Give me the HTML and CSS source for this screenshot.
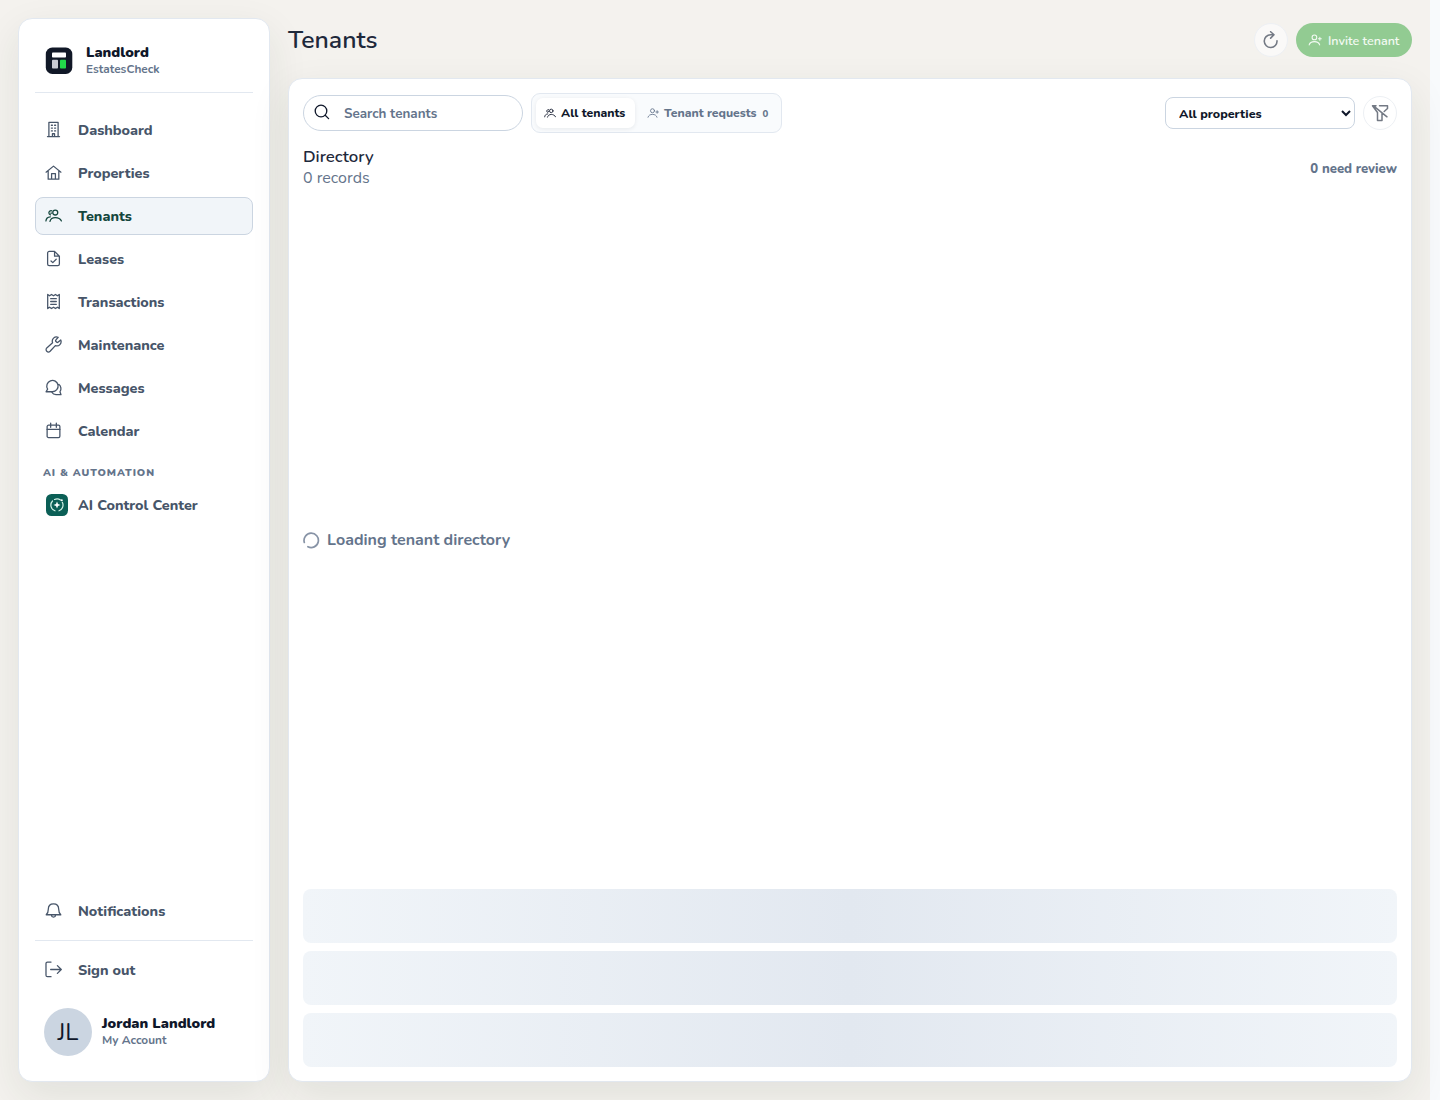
FILE: index.html
```html
<!DOCTYPE html>
<html lang="en">
<head>
  <meta charset="UTF-8">
  <meta name="viewport" content="width=device-width, initial-scale=1.0">
  <title>Tenants - EstatesCheck</title>
  <link rel="stylesheet" href="styles.css">
</head>
<body>
  <!-- Shared icons -->
  <svg class="icon-defs" width="0" height="0">
    <symbol id="group" viewBox="0 0 24 24">
      <circle cx="14.5" cy="7.800" r="3.500"/>
      <path d="M7 20.300c.8-3.400 3.800-5.400 7.500-5.400s7.300 1.700 8.700 4.800M9.500 5.300C7 4.800 5.300 6.500 5.500 8.500c.1 1.300.9 2.300 2.200 2.600M1.300 19.700c.3-3.500 2.400-5.600 6.200-5.900M8.200 8.800h1.500"/>
    </symbol>
    <symbol id="user-plus" viewBox="0 0 24 24">
      <circle cx="11" cy="7.500" r="4"/>
      <path d="M2 20.500c1-4 4.600-5.700 9-5.700s8 1.700 9 5.700M20.300 7.500v5M17.800 10h5"/>
    </symbol>
  </svg>

  <div class="app">
    <aside class="sidebar">
      <div class="brand">
        <svg class="brand-logo" viewBox="0 0 28 28">
          <rect x="0.800" y="0.500" width="26.500" height="26.500" rx="6.500" fill="#111827"/>
          <rect x="7" y="5.500" width="14" height="5" rx="0.800" fill="#fff"/>
          <rect x="7" y="12.800" width="6" height="8.700" rx="0.800" fill="#c9cbd3"/>
          <rect x="15" y="12.800" width="6" height="8.700" rx="0.800" fill="#22d94a"/>
        </svg>
        <div class="brand-text">
          <div class="brand-name">Landlord</div>
          <div class="brand-sub">EstatesCheck</div>
        </div>
      </div>

      <nav class="nav">
        <a class="nav-item">
          <svg class="icon" viewBox="0 0 24 24"><path d="M5.500 22V1.800h13V22M3.500 22h17M10.500 22v-4h3v4M9 6h1.500M13.500 6h1.500M9 10h1.500M13.500 10h1.500M9 14h1.500M13.500 14h1.500"/></svg>
          <span>Dashboard</span>
        </a>
        <a class="nav-item">
          <svg class="icon" viewBox="0 0 24 24"><path d="M1.500 11.500 12 3l10.500 8.500M4.500 9.500v12h15v-12M9.300 21.500v-8h5.400v8"/></svg>
          <span>Properties</span>
        </a>
        <a class="nav-item active">
          <svg class="icon"><use href="#group"/></svg>
          <span>Tenants</span>
        </a>
        <a class="nav-item">
          <svg class="icon" viewBox="0 0 24 24"><path d="M13.500 2H6A2.300 2.300 0 0 0 3.700 4.300v15.400A2.300 2.300 0 0 0 6 22h12a2.300 2.300 0 0 0 2.300-2.300V8.800zM13.500 2v6.800h6.800M8.500 15.500l2.500 2.300 4.800-4.800"/></svg>
          <span>Leases</span>
        </a>
        <a class="nav-item">
          <svg class="icon" viewBox="0 0 24 24"><path d="M3.800 2 6.500 4l2.700-2L12 4l2.800-2 2.700 2 2.700-2v20l-2.700-2-2.700 2-2.800-2-2.800 2-2.700-2-2.700 2zM8 8h8M8 12h8M8 16h8"/></svg>
          <span>Transactions</span>
        </a>
        <a class="nav-item">
          <svg class="icon" viewBox="0 0 24 24"><path d="M15.200 5.800a1.500 1.500 0 0 0 0 1.700l1.400 1.400a1.500 1.500 0 0 0 1.700 0l3.900-3.300a6 6 0 0 1-7.600 8L7.200 21.500a3 3 0 0 1-4.700-4.700L10.700 9.500a6 6 0 0 1 7.900-7.700z"/></svg>
          <span>Maintenance</span>
        </a>
        <a class="nav-item">
          <svg class="icon" viewBox="0 0 24 24"><path d="M1.500 18 3.700 14.200A8 8 0 1 1 10.500 18zM19.400 7.500a7.500 7.500 0 0 1 1.700 10.500l1.500 4.200h-7.100a8 8 0 0 1-6-3.500"/></svg>
          <span>Messages</span>
        </a>
        <a class="nav-item">
          <svg class="icon" viewBox="0 0 24 24"><rect x="3" y="4.500" width="18" height="17.500" rx="2"/><path d="M3 10.500h18M8 1.500v6M16 1.500v6"/></svg>
          <span>Calendar</span>
        </a>
      </nav>

      <div class="nav-label">AI &amp; AUTOMATION</div>
      <a class="nav-item">
        <svg class="ai-icon" viewBox="0 0 22 22">
          <rect width="22" height="22" rx="5.500" fill="#0b5f56"/>
          <path d="M9 16.800A6 6 0 0 1 6.500 7M8.500 5.500A6 6 0 0 1 14.500 6M16.300 8.300a6 6 0 0 1-3.300 8.500" fill="none" stroke="#d3f3e7" stroke-width="1.200"/>
          <path d="m11 7.500 1 2.500 2.500 1-2.500 1-1 2.500-1-2.500-2.500-1 2.500-1z" fill="#fff"/>
          <circle cx="15.800" cy="6.300" r="1" fill="#fff"/>
        </svg>
        <span>AI Control Center</span>
      </a>

      <div class="sidebar-footer">
        <a class="nav-item">
          <svg class="icon" viewBox="0 0 24 24"><path d="M1.700 18c2.500-2 3-3.500 3-8C4.700 5 7.500 2.500 12 2.500s7.300 2.500 7.300 7.500c0 4.500.5 6 3 8zM9 18.500c.3 2 1.500 3 3 3s2.700-1 3-3"/></svg>
          <span>Notifications</span>
        </a>
        <hr class="divider">
        <a class="nav-item">
          <svg class="icon" viewBox="0 0 24 24"><path d="M8.500 1.500h-5A2.100 2.100 0 0 0 1.400 3.600v16.500a2.100 2.100 0 0 0 2.100 2.100h5M8 12h15M17.500 6.500 23 12l-5.500 5.500"/></svg>
          <span>Sign out</span>
        </a>
        <div class="account">
          <div class="avatar">JL</div>
          <div>
            <div class="account-name">Jordan Landlord</div>
            <div class="account-sub">My Account</div>
          </div>
        </div>
      </div>
    </aside>

    <main class="main">
      <header class="page-header">
        <h1>Tenants</h1>
        <div class="header-actions">
          <button class="round-btn refresh">
            <svg viewBox="0 0 24 24"><path d="M15.500 5H11.500A8.500 8.500 0 1 0 20 13M11.500 1l4.500 4-4.500 4.500"/></svg>
          </button>
          <button class="invite-btn">
            <svg><use href="#user-plus"/></svg>
            <span>Invite tenant</span>
          </button>
        </div>
      </header>

      <section class="panel">
        <div class="toolbar">
          <label class="search">
            <svg viewBox="0 0 16 16"><circle cx="7" cy="7" r="5.800"/><path d="m11.200 11.200 3.400 3.400"/></svg>
            <input type="text" placeholder="Search tenants">
          </label>
          <div class="tabs">
            <button class="tab selected">
              <svg><use href="#group"/></svg>
              <span>All tenants</span>
            </button>
            <button class="tab">
              <svg><use href="#user-plus"/></svg>
              <span>Tenant requests</span>
              <span class="count">0</span>
            </button>
          </div>
          <div class="filters">
            <select>
              <option>All properties</option>
            </select>
            <button class="round-btn clear">
              <svg viewBox="0 0 18 18"><path d="M8.500 1.800h8v2.700l-3.300 3M5 1.800H1.500L6.500 8.500v8H11V9.500M2.500 1.800l13.500 11"/></svg>
            </button>
          </div>
        </div>

        <div class="directory-head">
          <div>
            <h2>Directory</h2>
            <p>0 records</p>
          </div>
          <span class="review">0 need review</span>
        </div>

        <div class="loading">
          <svg viewBox="0 0 18 18"><path d="M1.400 11A7.600 7.600 0 1 1 5.200 15.600"/></svg>
          <span>Loading tenant directory</span>
        </div>

        <div class="skeletons">
          <div class="skeleton"></div>
          <div class="skeleton"></div>
          <div class="skeleton"></div>
        </div>
      </section>
    </main>
  </div>
</body>
</html>
```
FILE: styles.css
```css
* {
  box-sizing: border-box;
}

body {
  margin: 0;
  height: 1100px;
  overflow: hidden;
  background-color: #f8fafc;
  color: #0f172a;
  font-family: Nunito, "Open Sans", sans-serif;
}

h1, h2, p {
  margin: 0;
}

button, input, select {
  font-family: inherit;
}

svg {
  display: block;
  flex: none;
  fill: none;
  stroke: currentColor;
  stroke-linecap: round;
  stroke-linejoin: round;
}

.icon-defs {
  position: absolute;
}

.app {
  display: flex;
  gap: 18px;
  width: 1430px;
  height: 1100px;
  padding: 18px;
  background-color: #f4f2ee;
}

/* Sidebar */
.sidebar {
  display: flex;
  flex-direction: column;
  width: 252px;
  padding: 16px;
  background-color: #fff;
  border: 1px solid #e2e8f0;
  border-radius: 14px;
  box-shadow: 0 14px 40px rgba(30, 50, 35, 0.09);
}

.brand {
  display: flex;
  align-items: center;
  gap: 13px;
  height: 58px;
  padding: 0 10px 7px;
  border-bottom: 1px solid #e2e8f0;
  line-height: 17px;
}

.brand-logo {
  width: 28px;
  height: 28px;
  stroke: none;
  margin-top: 2px;
}

.brand-text {
  padding-top: 2px;
}

.brand-name,
.account-name {
  font-size: 14.4px;
  font-weight: 900;
}

.brand-sub,
.account-sub {
  font-size: 11.84px;
  font-weight: 700;
  color: #64748b;
}

.nav {
  display: flex;
  flex-direction: column;
  gap: 5px;
  margin-top: 18px;
}

.nav-item {
  display: flex;
  align-items: center;
  height: 38px;
  padding: 0 10px;
  border: 1px solid transparent;
  border-radius: 8px;
  color: #475569;
  font-size: 14.4px;
  font-weight: 800;
}

.nav-item.active {
  background-color: #f1f5f9;
  border-color: #cbd5e1;
  color: #14463d;
}

.icon {
  width: 17px;
  height: 17px;
  margin: 0 16px 1px -1px;
  stroke-width: 1.8;
}

.ai-icon {
  width: 22px;
  height: 22px;
  margin-right: 10px;
  stroke: none;
}

.nav-label {
  margin: 15px 0 6px 8px;
  font-size: 10.4px;
  font-weight: 900;
  line-height: 15px;
  letter-spacing: 0.94px;
  color: #64748b;
}

.sidebar-footer {
  margin-top: auto;
}

.divider {
  height: 1px;
  margin: 10px 0;
  border: none;
  background-color: #e2e8f0;
}

.account {
  display: flex;
  align-items: center;
  gap: 10px;
  padding: 19px 9px 9px;
  line-height: 17px;
}

.avatar {
  display: flex;
  align-items: center;
  justify-content: center;
  width: 48px;
  height: 48px;
  border-radius: 50%;
  background-color: #cbd5e1;
  font-size: 24px;
}

/* Main column */
.main {
  flex: 1;
  display: flex;
  flex-direction: column;
}

.page-header {
  display: flex;
  justify-content: space-between;
  height: 60px;
  padding-top: 5px;
}

h1 {
  font-size: 24.8px;
  font-weight: 600;
  line-height: 34px;
  color: #1e293b;
}

.header-actions {
  display: flex;
  gap: 8px;
}

.round-btn {
  display: flex;
  align-items: center;
  justify-content: center;
  width: 34px;
  height: 34px;
  padding: 0;
  border: 1px solid #edf0f4;
  border-radius: 50%;
  background-color: #fff;
  color: #737984;
}

.round-btn svg {
  width: 18px;
  height: 18px;
  stroke-width: 1.5;
}

.refresh {
  background-color: #faf9f8;
}

.refresh svg {
  stroke-width: 2.1;
}

.invite-btn {
  display: flex;
  align-items: center;
  gap: 6px;
  width: 116px;
  height: 34px;
  padding: 0 12px;
  border: none;
  border-radius: 17px;
  background-color: #92cb92;
  color: #f3faf3;
  font-size: 12.5px;
  font-weight: 600;
  white-space: nowrap;
}

.invite-btn span {
  padding-top: 1px;
}

.invite-btn svg {
  width: 14px;
  height: 14px;
  margin-bottom: 1px;
  stroke-width: 1.8;
}

.panel {
  flex: 1;
  display: flex;
  flex-direction: column;
  padding: 14px;
  background-color: #fff;
  border: 1px solid #e2e8f0;
  border-radius: 14px;
  box-shadow: 0 14px 40px rgba(30, 50, 35, 0.09);
}

/* Toolbar */
.toolbar {
  display: flex;
  align-items: center;
  gap: 8px;
  height: 40px;
}

.search {
  display: flex;
  align-items: center;
  gap: 14px;
  width: 220px;
  height: 36px;
  padding: 0 10px;
  border: 1px solid #cbd5e1;
  border-radius: 18px;
}

.search svg {
  width: 16px;
  height: 16px;
  margin-bottom: 2px;
  stroke-width: 1.3;
}

.search input {
  width: 150px;
  padding: 1px 0 0;
  border: none;
  outline: none;
  font-size: 13.44px;
  font-weight: 700;
}

.search input::placeholder {
  color: #64748b;
}

.tabs {
  display: flex;
  gap: 4px;
  width: 251px;
  height: 40px;
  padding: 4px;
  border: 1px solid #e2e8f0;
  border-radius: 9px;
  background-color: #f9fbfd;
}

.tab {
  display: flex;
  align-items: center;
  gap: 5px;
  height: 30px;
  padding: 0 8px;
  border: none;
  border-radius: 7px;
  background: none;
  color: #64748b;
  font-size: 12.16px;
  font-weight: 800;
  white-space: nowrap;
}

.tab svg {
  width: 12px;
  height: 12px;
  stroke-width: 1.7;
}

.tab.selected {
  width: 99px;
  background-color: #fff;
  color: #0f172a;
  box-shadow: 0 1px 4px rgba(15, 23, 42, 0.08);
}

.count {
  margin-left: 1px;
  font-size: 9.6px;
}

.filters {
  display: flex;
  align-items: center;
  gap: 8px;
  margin-left: auto;
}

select {
  width: 190px;
  height: 32px;
  padding: 1px 9px 0;
  border: 1px solid #cbd5e1;
  border-radius: 8px;
  background-color: #fff;
  color: #0f172a;
  font-size: 12.48px;
  font-weight: 800;
}

/* Directory */
.directory-head {
  display: flex;
  align-items: center;
  justify-content: space-between;
  height: 42px;
  margin-top: 14px;
}

.directory-head h2 {
  padding-bottom: 2px;
  font-size: 16.8px;
  font-weight: 600;
  line-height: 19px;
  color: #1e293b;
}

.directory-head p {
  font-size: 16px;
  line-height: 21px;
  color: #64748b;
}

.review {
  padding-top: 2px;
  font-size: 13.12px;
  font-weight: 800;
  color: #64748b;
}

.loading {
  flex: 1;
  display: flex;
  align-items: center;
  gap: 7px;
  padding-top: 2px;
  color: #64748b;
  font-size: 16px;
  font-weight: 700;
}

.loading svg {
  width: 17px;
  height: 17px;
  stroke: #8793a6;
  stroke-width: 1.8;
}

.skeletons {
  display: flex;
  flex-direction: column;
  gap: 8px;
}

.skeleton {
  height: 54px;
  border-radius: 8px;
  background: linear-gradient(90deg, #f1f5f9, #e2e8f0, #f1f5f9);
}
```
